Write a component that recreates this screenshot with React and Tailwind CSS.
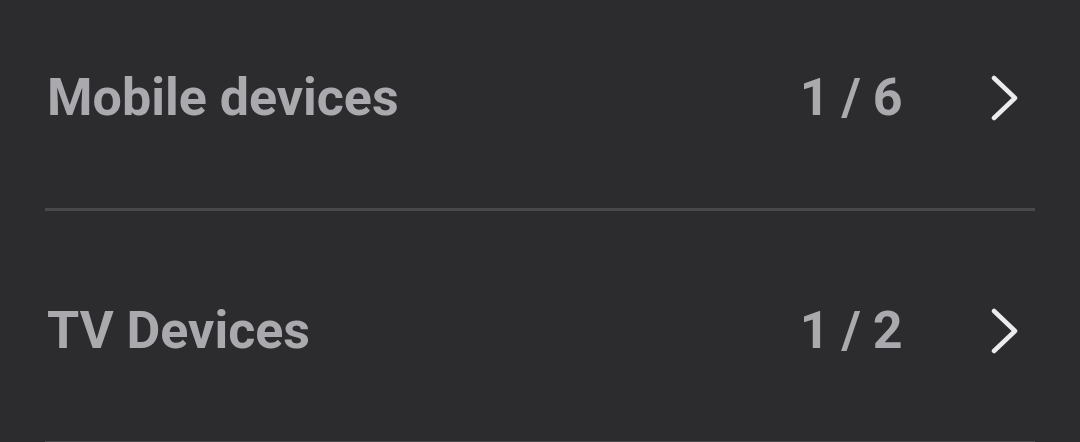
import React from "react";

const rows = [
  { label: "Mobile devices", count: "1 / 6" },
  { label: "TV Devices", count: "1 / 2" },
];

function Chevron() {
  return (
    <svg width="30" height="46" viewBox="0 0 30 46" fill="none" className="text-[#ebebeb]">
      <path d="M5 3 L26 23 L5 43" stroke="currentColor" strokeWidth="4.5" strokeLinecap="round" strokeLinejoin="round" />
    </svg>
  );
}

export default function App() {
  return (
    <div className="w-[1080px] h-[442px] overflow-hidden bg-[#2c2c2e] font-['Roboto',sans-serif]">
      <div className="-mt-[22px] px-[45px]">
        {rows.map((r) => (
          <div key={r.label} className="border-b-[3px] border-[#49494b]">
            <div className="h-[230px] pt-[9px] flex items-center">
              <div className="flex-1 pl-[2px] text-[52px] font-bold tracking-normal text-[#aaaaae]">{r.label}</div>
              <div className="text-[52px] font-bold tracking-[-0.01em] text-[#aaaaae]">{r.count}</div>
              <div className="ml-[87px] mr-[16px] flex items-center">
                <Chevron />
              </div>
            </div>
          </div>
        ))}
      </div>
    </div>
  );
}
